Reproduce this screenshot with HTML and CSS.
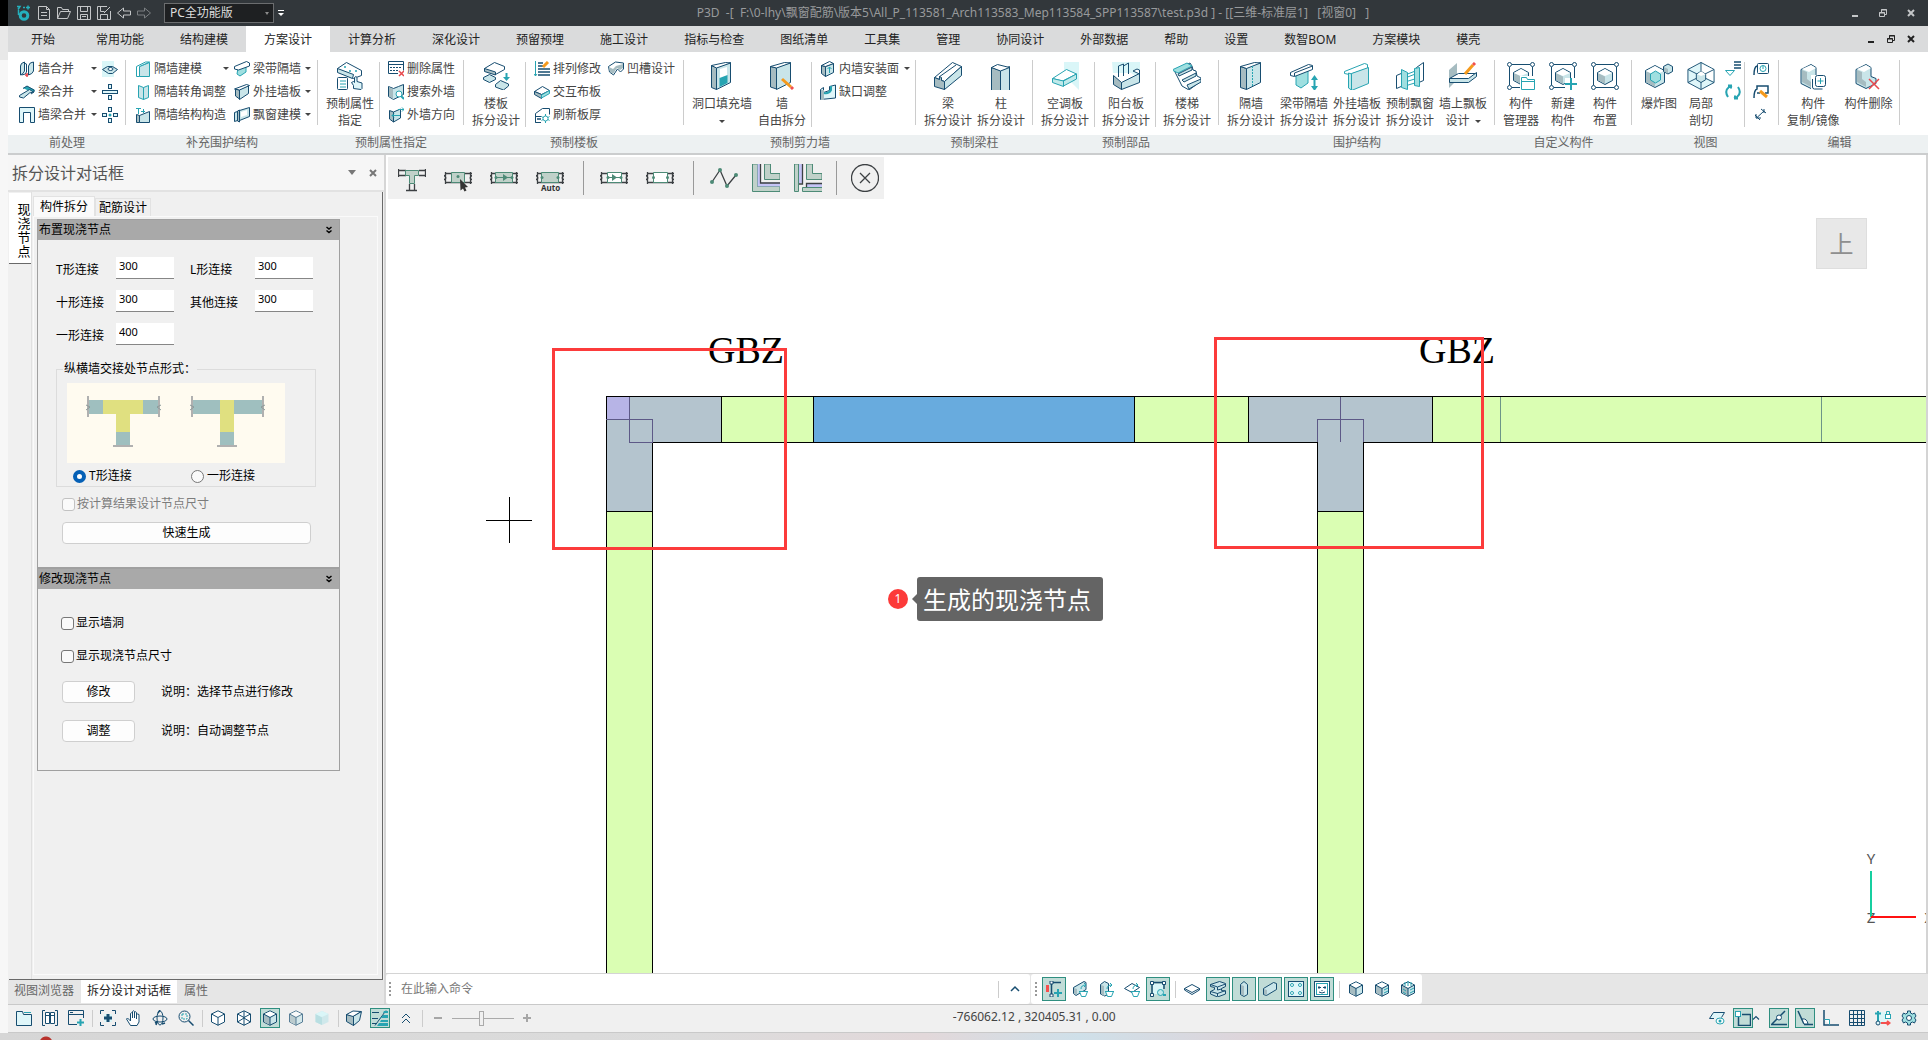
FILE: index.html
```html
<!DOCTYPE html>
<html lang="zh-CN">
<head>
<meta charset="utf-8">
<title>P3D</title>
<link rel="stylesheet" href="styles.css">
</head>
<body>
<svg class="sprite" aria-hidden="true">
  <!-- 28px ribbon icons -->
  <symbol id="b-attr" viewBox="0 0 28 28"><path class="fw" d="M1.500 6.500 10.500.5l15 8v5l-8 3-16-7z"/><path class="fl" d="M1.500 6.500v4l15 6 1-4z"/><circle class="tf" cx="9" cy="5" r="1"/><circle class="tf" cx="14" cy="9" r="1"/><circle class="tf" cx="20" cy="9" r="1"/><rect class="fw" x="1.500" y="15.500" width="10" height="12" rx="1"/><path class="tl" d="M4 19h6M4 22h6M4 25h6"/><path class="fa" d="M17.500 26.500v-3l-2-3 2-1 1 1v-5q1.500-2 2.500 0v4l5 1.500v5.500l-1 1z"/></symbol>
  <symbol id="b-floor" viewBox="0 0 28 28"><path class="fw" d="M2.500 6.500 12.500.5l10 4v3l-9 5-11-4z"/><path class="fg" d="M2.500 6.500v3l11 3.500v-3z"/><path class="fl" d="M1.500 15.500l6-3 6 3v2l-6 3-6-3z"/><path class="fl" d="M13.500 22.500l5-4 8 3.500v2l-5 4-8-3z"/><path class="tt" d="M24.500 11v5"/><path class="tf" d="M21 15h7l-3.500 4z"/></symbol>
  <symbol id="b-hole" viewBox="0 0 28 28"><path class="fl" d="M8.500 5.500l14-5v20l-14 7z"/><path class="fg" d="M3.500 3.500l5 2v22l-5-2z"/><path class="fw" d="M3.500 3.500l14-3 5 .5-14 5z"/><path class="wf" d="M12 7l7-2v12l-7 2z"/><path class="tf" d="M11.500 16l8-3v8l-8 4z"/></symbol>
  <symbol id="b-free" viewBox="0 0 28 28"><path class="fl" d="M8.500 5.500l14-5v20l-14 7z"/><path class="fg" d="M2.500 4.500l6 1.500v21l-6-2z"/><path class="fw" d="M2.500 4.500l14-4 6 .5-14 5z"/><path class="pen" d="M14 17l9 8"/><path class="rd" d="M23 25l2 2"/></symbol>
  <symbol id="b-beam" viewBox="0 0 28 28"><path class="fw" d="M.5 15.500 18.500.5l9 4-17 15z"/><path class="fg" d="M.5 15.500v9l10 3v-8l-3-1v-3l-2-1v3z"/><path class="fl" d="M10.500 19.500l17-15v9l-17 14z"/><path class="ol" d="M5 15 22 3"/></symbol>
  <symbol id="b-col" viewBox="0 0 28 28"><path class="fl" d="M13.500 8.500l9-4v24h-9z"/><path class="fg" d="M4.500 5.500l9 3v20h-9z"/><path class="fw" d="M4.500 5.500l6-3 12 3-9 3.500z"/></symbol>
  <symbol id="b-ac" viewBox="0 0 28 28"><path class="aq" d="M13 0h15v28l-9-9-6-5z"/><path class="tw" d="M1.500 16.500l14-9 10 4.500-14 7z"/><path class="tg" d="M1.500 16.500v4l11 4v-5.500z"/><path class="tg" d="M12.500 19l13-7v5l-13 7z"/></symbol>
  <symbol id="b-balc" viewBox="0 0 28 28"><path class="aq" d="M0 0h28v17l-9-6H1z"/><path class="fl" d="M9.500 20.500l18-9v9l-18 7z"/><path class="fg" d="M1.500 13.500l8 7v7l-8-5z"/><path class="ol" d="M6.500 15V4l5-2v12M11.500 4l5-3v11"/><path class="fw" d="M21 9l4-2 2.500 1v4z"/></symbol>
  <symbol id="b-stair" viewBox="0 0 28 28"><path class="fw" d="M1 8 17 1l2 3 1 4 3 1 1 5 4 2v3l-12 9-7-4z"/><path class="ttg" d="M-1 8 14 1l5 3-14 7z"/><path class="fl" d="M5 12l14-7v3L6 14zM9 18l14-7v3l-12 6zM14 23l14-6v3l-12 7z"/></symbol>
  <symbol id="b-pwall" viewBox="0 0 28 28"><path class="fl" d="M9.500 5.500l14-5v20l-14 7z"/><path class="fg" d="M3.500 4.500l6 2v21l-6-2z"/><path class="fw" d="M3.500 4.500l14-4 6 .5-14 5.500z"/><path class="tl" stroke-dasharray="2 1" d="M15.500 4v21"/></symbol>
  <symbol id="b-bwall" viewBox="0 0 28 28"><path class="ttg" d="M6 11l12-4v14l-7 5-5-3z"/><path class="fw" d="M.5 10.500 18.500 2.500l4 1v4l-18 7-4-1z"/><path class="ol" d="M4.500 14v-3l18-7"/><path class="tt" d="M24.500 16v9"/><path class="tf" d="M21 18l3.500-5 3.500 5zM21 24l3.500 5 3.500-5z"/></symbol>
  <symbol id="b-hwall" viewBox="0 0 28 28"><path class="tw" d="M1.500 9.500 21.500 1.500l3 1v4l-18 6-5-1z"/><path class="tl2" d="M8.500 11.500l17-6v16l-17 7z"/><path class="tg" d="M5.500 11l3 1v16l-3-2z"/></symbol>
  <symbol id="b-bay" viewBox="0 0 28 28"><path class="fw" d="M.5 13.500l7-3v13l-7 3zM20.500 5.500l7-5v18l-7 3z"/><path class="tw" d="M9 13l13-5v3l-13 5zM9 20l13-4v4l-13 4z"/><path class="ttg" d="M5.500 7.500l6 3v17l-6-2zM18.500 6.500l5-1v19l-5-1z"/></symbol>
  <symbol id="b-upbay" viewBox="0 0 28 28"><path class="gf" d="M0 8 8 1v17l-8 8z"/><path class="fw" d="M.5 16.500l9-5h18l-8 6z"/><path class="fl" d="M.5 16.500h19l8-6v4l-8 6h-19z"/><path class="pen" d="M16 12l8-9"/><path class="rd" d="M24 3l2-2"/></symbol>
  <symbol id="frame" viewBox="0 0 28 28"><path class="ol" d="M5 2.500h18M5 25.500h18M2.500 5v18M25.500 5v18"/><circle class="fw" cx="2.500" cy="2.500" r="2"/><circle class="fw" cx="25.500" cy="2.500" r="2"/><circle class="fw" cx="2.500" cy="25.500" r="2"/><circle class="fw" cx="25.500" cy="25.500" r="2"/><path class="fl" d="M14 6.500l7.500 4v8l-7.500 4-7.500-4v-8z"/><path class="gf" d="M7 11l7 3.500V22l-7-4z"/><path class="wf" d="M14 7l7 4-7 3-7-3z"/></symbol>
  <symbol id="b-mgr" viewBox="0 0 28 28"><use href="#frame"/><path class="wf" d="M13 14h15v14H13z"/><path class="tw" d="M14.500 27.500v-12h5l1 2h7v10zM15 19.500h12"/></symbol>
  <symbol id="b-new" viewBox="0 0 28 28"><use href="#frame"/><path class="wf" d="M16 16h12v12H16z"/><path class="tt" d="M22 16v12M16 22h12"/></symbol>
  <symbol id="b-explode" viewBox="0 0 28 28"><path class="fl" d="M10 3.500l9.500 5v12l-9.500 5-9.500-5v-12z"/><path class="gf" d="M1 9l9 4.500V25l-9-5z"/><path class="wf" d="M10 4l9 5-9 4-9-4z"/><path class="ttg" d="M10.500 9l5 3v6l-5 3-5-3v-6z"/><path class="fl" d="M23 2l4.500 2.500v5L23 12l-4.500-2.500v-5z"/><path class="gf" d="M19 5l4 2v4.500l-4-2z"/></symbol>
  <symbol id="b-section" viewBox="0 0 30 30"><path class="fa" d="M15 .5l14 7.500v14l-14 7.500L1 22V8z"/><path class="wf" d="M15 2v12l13 7V8z"/><path class="ol" d="M15 .5v29M1 8l28 14M29 8 1 22"/><path class="fl" d="M15 10l5 3v6l-5 3-5-3v-6z"/><path class="wf" d="M15 10l5 3-5 2-4-2z"/></symbol>
  <symbol id="b-copy" viewBox="0 0 28 28"><path class="fl" d="M12 2.500l5 3v9l5 2v5l-10 5-10-5v-14z"/><path class="gf" d="M3 8l5 2v7l4 3v5l-9-5z"/><path class="wf" d="M12 3l5 3-7 4-7-3z"/><path class="wf" d="M12 13h14v15H12z"/><rect class="fw" x="16.500" y="13.500" width="10" height="11" rx="2"/><path class="ol" d="M13.500 17v8q0 2 2 2h8"/><path class="tl" d="M21.500 16v6M18.500 19h6"/></symbol>
  <symbol id="b-del" viewBox="0 0 28 28"><path class="fl" d="M12 2.500l5 3v9l5 2v5l-10 5-10-5v-14z"/><path class="gf" d="M3 8l5 2v7l4 3v5l-9-5z"/><path class="wf" d="M12 3l5 3-7 4-7-3z"/><path class="rl" d="M15 17l10 10M25 17l-10 10"/></symbol>

  <!-- 16px ribbon icons -->
  <symbol id="i-wm" viewBox="0 0 16 16"><path class="fl" d="M1.500 5q0-3 4-4v9q-1 3-4 4zM9.500 5q1-4 5-4v9q-1 3-5 4z"/><path class="ol" d="M5.500 3q2-1 2 0v8q-1 3-5 3"/><path class="rl" d="M6 14h3M8 12v4"/></symbol>
  <symbol id="i-bm" viewBox="0 0 16 16"><path class="tf" d="M4 4l4-2 8 4-2 3z"/><path class="fl" d="M.5 11.500l10-6 4 2.500-4 1-6 5-4-1z"/><path class="ol" d="M4 4.500 8 2l7 4v2l-3 2"/></symbol>
  <symbol id="i-wb" viewBox="0 0 16 16"><path class="fa" d="M.5 15.500V.5h15v15h-4v-10h-7v10z"/></symbol>
  <symbol id="i-m1" viewBox="0 0 16 16"><path class="aq" d="M0 0h12v16H0z"/><path class="fl" d="M.5 8.500l5-3h5l5 3-5 4h-4z"/><ellipse class="fw" cx="8.500" cy="8" rx="2.500" ry="1.500"/></symbol>
  <symbol id="i-m2" viewBox="0 0 16 16"><rect class="fa" x="6.500" y=".5" width="3" height="4"/><rect class="fa" x=".5" y="6.500" width="15" height="3"/><rect class="fa" x="6.500" y="11.500" width="3" height="4"/></symbol>
  <symbol id="i-m3" viewBox="0 0 16 16"><rect class="fa" x="6.500" y=".5" width="3" height="4"/><rect class="fa" x=".5" y="6.500" width="4" height="3"/><rect class="fa" x="11.500" y="6.500" width="4" height="3"/><rect class="fa" x="6.500" y="11.500" width="3" height="4"/><circle class="tf" cx="8" cy="8" r="1.500"/></symbol>
  <symbol id="i-pb" viewBox="0 0 16 16"><path class="tl2" d="M4.500 5.500l10-4v14h-10z"/><path class="tw" d="M1.500 5.500l9-4.500h4l-10 4.500v10h-3z"/></symbol>
  <symbol id="i-pc" viewBox="0 0 16 16"><path class="tl2" d="M3.500 1.500l5 2v12l-5-2z"/><path class="tl2" d="M8.500 3.500l5-2v12l-5 2z"/></symbol>
  <symbol id="i-ps" viewBox="0 0 16 16"><path class="fl" d="M4.500 8.500l10-4v11h-10z"/><path class="fg" d="M1.500 7.500l3 1v7h-3z"/><path class="tl" d="M1 1.500h5M3.500 1v6M6 4.500h4M8.500 2v4"/></symbol>
  <symbol id="i-bw" viewBox="0 0 16 16"><path class="ttg" d="M4 7l8-3v7l-6 4-3-2z"/><path class="fw" d="M.5 5.500l12-5 3 1.500v3l-11 4-4-1z"/></symbol>
  <symbol id="i-hw" viewBox="0 0 16 16"><path class="fl" d="M5.500 5.500l9-4v8l-9 6z"/><path class="fg" d="M1.500 5l4 1v9l-4-3z"/><path class="fw" d="M.5 5l12-4.500 3 1-10 4.500z"/></symbol>
  <symbol id="i-by" viewBox="0 0 16 16"><path class="fl" d="M.5 5.500l3-1v9l-3 1zM5.500 3.500l10-3v9l-10 4z"/><path class="fg" d="M3.500 4l2-1v12l-2-1z"/><path class="wf" d="M7 5l6-2v5l-6 2z"/></symbol>
  <symbol id="i-da" viewBox="0 0 16 16"><path class="fw" d="M.5.500h15v9M10 12.500H.5V.500M.5 3.500h15"/><path class="ol" stroke-dasharray="2 1" d="M2 6.500h11M2 9.500h9"/><path class="rl" d="M11 10l5 5M16 10l-5 5"/></symbol>
  <symbol id="i-se" viewBox="0 0 16 16"><path class="fl" d="M.5 2.500l5 2 5-2 5-2v10l-10 5-5-3z"/><path class="gf" d="M1 3l4 2v10l-4-3z"/><circle class="tw" cx="11" cy="10" r="3"/><path class="tt" d="M13 12l3 3"/></symbol>
  <symbol id="i-di" viewBox="0 0 16 16"><path class="fl" d="M5.500 5l7-3v9l-7 4z"/><path class="fg" d="M1.500 3.500l4 1.500v10l-4-3z"/><path class="tl" d="M10 2.500h6M14 .5l2 2-2 2M12 8.500H4M6 6.500l-2 2 2 2"/></symbol>
  <symbol id="i-ar" viewBox="0 0 16 16"><path class="tl" d="M1.500 0v15M0 13l1.500 2L3 13"/><path class="ol2" d="M4 2h5M4 5h5M4 8h12M4 11h12M4 14h12"/><path class="pen" d="M9 6l5-5"/></symbol>
  <symbol id="i-in" viewBox="0 0 16 16"><path class="fw" d="M.5 7.500l8-5 7 4-8 4z"/><path class="fg" d="M.5 7.500v3l7 4v-4z"/><path class="ttg" d="M7.500 11l8-4.500v3l-8 4.500z"/></symbol>
  <symbol id="i-re" viewBox="0 0 16 16"><path class="fw" d="M1.500 15.500v-9l7-5h7v6M7 15.500H1.500v-6h6"/><path class="ol2" d="M3 12h4"/><circle class="tw" cx="11.500" cy="11.500" r="2.500"/><path class="tl" d="M11.500 7v2M11.500 14v2M7.500 9.500l1.500 1M14 12.500l1.500 1M15.500 9.500l-1.500 1M9 12.500l-1.500 1"/></symbol>
  <symbol id="i-gr" viewBox="0 0 16 16"><path class="fw" d="M.5 5.500l7-4.500 8 1v6l-3 3-3-3-4 6-4-3z"/><path class="gf" d="M1 6l4 2 3-3 7-2v4l-3 2-3-2-4 6-3-2z"/></symbol>
  <symbol id="i-iw" viewBox="0 0 16 16"><path class="fl" d="M5.500 5.500l8-3v9l-8 4z"/><path class="fg" d="M1.500 4.500l4 1v10l-4-3z"/><path class="fw" d="M1.500 4.500 9.500.5l4 2-8 3z"/><path class="tl" d="M9.500 12V6M7.500 8l2-2 2 2"/></symbol>
  <symbol id="i-ga" viewBox="0 0 16 16"><path class="fa" d="M.5 15.500v-10l3-2v5l6-2v-4l6-1.500v13z"/><path class="gf" d="M1 6h3v10H1z"/><path class="tt" d="M4 9q5 1 7-3V2"/></symbol>
  <symbol id="i-list" viewBox="0 0 16 16"><path class="ol2" d="M9 1h7M9 4h7M9 7h7"/><path class="tw" d="M.5 9.500h9l-4.500 5z"/></symbol>
  <symbol id="i-rot" viewBox="0 0 16 16"><path class="tt" d="M3 13Q-1 7 4 3l3-1M3 1.500h3v3M13 3q4 6-1 10l-3 1M13 14.500h-3v-3"/></symbol>
  <symbol id="i-an1" viewBox="0 0 16 16"><path class="ol2" d="M1 14q0-8 3-9"/><rect class="fw" x="4.500" y="2.500" width="11" height="10" rx="1"/><circle class="tl" cx="10" cy="7.500" r="3"/><path class="tl" d="M10 5v3"/></symbol>
  <symbol id="i-an2" viewBox="0 0 16 16"><path class="ol2" d="M1 14q0-8 3-9V2h11v7h-3M4 9h3"/><path class="pen" d="M7 7l7 6"/></symbol>
  <symbol id="i-an3" viewBox="0 0 16 16"><path class="ol" d="M3.500 11 11 4M8 2l5 4M11 6V2M2 8l5 5M3 7v4h5"/></symbol>

  <!-- view and status bar icons -->
  <symbol id="s-tab" viewBox="0 0 16 16"><path class="fa" d="M.5 15.500V1.500h6l1 3h8v11z"/><path class="tl" d="M8 2.500h7"/></symbol>
  <symbol id="s-split" viewBox="0 0 16 16"><path class="ol" d="M3 .5H.5v15H3M13 .5h2.500v15H13"/><path class="fw" d="M3.500 2.500h4v11h-4zM8.500 2.500h4v11h-4zM3.500 5.500h4M8.500 5.500h4"/></symbol>
  <symbol id="s-win" viewBox="0 0 16 16"><path class="ol" d="M15.500 8V.500H.5v14H9M.5 4.500h15M2 2.500h3"/><path class="tt" d="M12.500 9v7M9 12.500h7"/></symbol>
  <symbol id="s-fit" viewBox="0 0 16 16"><path class="aq" d="M4 4h8v8H4z"/><path class="ol" d="M.5 4V.500H4M12 .5h3.500V4M15.500 12v3.500H12M4 15.500H.5V12"/><path class="ol3" d="M8 4v8M4 8h8"/></symbol>
  <symbol id="s-hand" viewBox="0 0 16 16"><path class="fw" d="M4.500 15.500 .5 9l1-1 3 3V3.500q1-1.500 2 0V8 1.500q1-1.500 2 0V8 2.500q1-1.500 2 0V9 4.500q1-1 2.500 0V12l-2 3.500z"/></symbol>
  <symbol id="s-orbit" viewBox="0 0 16 16"><ellipse class="ol" cx="8" cy="9" rx="7" ry="3"/><ellipse class="ol" cx="8" cy="8" rx="3" ry="7"/><path class="ol2" d="M3 13l2-1-1 3M10 14l3-1M6 3l2-3"/></symbol>
  <symbol id="s-zoom" viewBox="0 0 16 16"><circle class="ol" cx="6.500" cy="6.500" r="5.500"/><path class="tl" stroke-dasharray="2 1" d="M4 4h5v5H4z"/><path class="ol2" d="M10.500 10.500l5 5"/></symbol>
  <symbol id="c-wire" viewBox="0 0 16 16"><path class="fw" d="M8 .8 14.500 4v8L8 15.200 1.500 12V4z"/><path class="ol" d="M1.500 4 8 7.500 14.500 4M8 7.500v8"/></symbol>
  <symbol id="c-full" viewBox="0 0 16 16"><use href="#c-wire"/><path class="ol" d="M8 1v7M1.500 12 8 8l6.500 4"/></symbol>
  <symbol id="c-shade" viewBox="0 0 16 16"><path class="fl" d="M8 .8 14.500 4v8L8 15.200 1.500 12V4z"/><path class="gf" d="M2 4.500 8 7.500V15l-6-3z"/><path class="wf" d="M8 1.500 13.500 4 8 7 2.500 4z"/><path class="ol" d="M1.500 4 8 7.500 14.500 4M8 7.500v8"/></symbol>
  <symbol id="c-soft" viewBox="0 0 16 16"><path class="lf" d="M8 1l6.500 3v8L8 15l-6.500-3V4z"/><path class="gf2" d="M1.500 4 8 7.500V15l-6.500-3z"/><path class="aq" d="M8 1l6.500 3L8 7 1.500 4z"/></symbol>
  <symbol id="c-dot" viewBox="0 0 16 16"><use href="#c-shade"/><path class="tl" d="M10 9l4-2M10 12l4-2"/></symbol>
  <symbol id="c-open" viewBox="0 0 16 16"><use href="#c-shade"/><path class="tl" d="M10 9l4-2M10 12l4-2M3 8l3 2M3 11l3 2M5 1v4M8 0v5M11 1v4"/></symbol>
  <symbol id="s-persp" viewBox="0 0 16 16"><path class="fl" d="M7.500 6l8-4.500-2 9-6 5z"/><path class="fg" d="M.5 4.500l7 1.500v9.500l-7-4z"/><path class="fw" d="M.5 4.500 7 1l8 .5-8 5z"/></symbol>
  <symbol id="s-vis" viewBox="0 0 16 16"><path class="ol" d="M0 2.500h7M0 8.500h6M0 13.500h5M3 15.500 14 .5"/><path class="tf" d="M11 5h5v3H9zM9 10h7v2H8zM7 13h9v3H5zM12 1h4v2h-5z"/></symbol>
  <symbol id="s-up" viewBox="0 0 16 16"><path class="ol" d="M4 8l4-4 4 4M4 13l4-4 4 4"/></symbol>
  <symbol id="s-chev" viewBox="0 0 16 16"><path class="ol2" d="M4 10l4-4 4 4"/></symbol>
  <symbol id="s-plus" viewBox="0 0 16 16"><path class="gl" d="M8 4v8M4 8h8"/></symbol>
  <symbol id="s-minus" viewBox="0 0 16 16"><path class="gl" d="M4 8h8"/></symbol>
  <symbol id="k-axis" viewBox="0 0 16 16"><path class="rf" d="M0 4h3v7H0z"/><path class="ol2" d="M5.500 2v12M5 1.500h10"/><path class="fw" d="M4 0h3v3H4zM4 13h3v3H4z"/><path class="tt" d="M12 8v8M8 12h8"/></symbol>
  <symbol id="k-cup" viewBox="0 0 16 16"><path class="tl" d="M9 8q0-4 5-4M12 2l2 2-2 2"/><path class="tw" d="M7.500 10.500h8l-2 5h-4zM7 10.500h9"/></symbol>
  <symbol id="k-wall" viewBox="0 0 16 16"><path class="fl" d="M1.500 6.500 12 .5l2 1v7l-10 6-2.500-2z"/><path class="gf" d="M2 7l3 1v6l-3-2z"/><use href="#k-cup"/></symbol>
  <symbol id="k-col" viewBox="0 0 16 16"><path class="fl" d="M2.500 3.500l4-3 4 2v11l-4 1.500-4-2z"/><path class="gf" d="M3 4l3 1v10l-3-2z"/><use href="#k-cup"/></symbol>
  <symbol id="k-slab" viewBox="0 0 16 16"><path class="fw" d="M.5 7.500 8 2.500l7.500 4-7.500 5z"/><use href="#k-cup"/></symbol>
  <symbol id="k-frame" viewBox="0 0 16 16"><path class="aq" d="M3 3h10v10H3z"/><path class="ol2" d="M2 3v10M3 1.500h10M14 3v5"/><path class="fw" d="M.5.500h3v3h-3zM12.500.5h3v3h-3zM.5 12.500h3v3h-3z"/><circle class="tg" cx="10.500" cy="11.500" r="3"/><path class="tt" d="M13 14h3"/></symbol>
  <symbol id="k-plate" viewBox="0 0 16 16"><path class="fw" d="M.5 7.500 8 3.500l7.500 4v1.500L8 13.500.5 9z"/><path class="ol" d="M.5 7.500 8 11.500l7.500-4"/></symbol>
  <symbol id="k-beam" viewBox="0 0 16 16"><path class="fl" d="M.5 3.500l9-3 6 2v3l-4 2v2l4 .5v3l-8 3-7-3v-2.500l4-2V6.500l-4-1z"/><path class="ol" d="M.5 3.500l7 2.500 8-3M7.500 6v3l4-1M.5 10.500l7 2 8-3M7.500 12v3.500"/></symbol>
  <symbol id="k-pill" viewBox="0 0 16 16"><path class="fl" d="M4.500 3.500 8 .5l3.500 3v10L8 15.500l-3.500-2z"/><path class="gf" d="M5 4l3 1v10l-3-2z"/></symbol>
  <symbol id="k-board" viewBox="0 0 16 16"><path class="fl" d="M1.500 7.500l10-6 3 1v6l-10 6-3-1z"/><path class="gf" d="M2 8l3 1v5l-3-1z"/></symbol>
  <symbol id="k-dice" viewBox="0 0 16 16"><rect class="fa" x=".5" y=".5" width="15" height="15"/><circle class="tw" cx="4" cy="4" r="1.500"/><circle class="tw" cx="12" cy="4" r="1.500"/><circle class="tw" cx="4" cy="12" r="1.500"/><circle class="tw" cx="12" cy="12" r="1.500"/></symbol>
  <symbol id="k-sock" viewBox="0 0 16 16"><rect class="fw" x=".5" y=".5" width="15" height="15"/><rect class="tl" x="2.500" y="2.500" width="11" height="11"/><path class="ol" d="M5 5v3M4 6.500h3M11 5v3M9 6.500h3M5 11l3 1 3-1M8 9v1"/></symbol>
  <symbol id="r-eye" viewBox="0 0 16 16"><path class="fa" d="M.5 8.500l4-6h11l-3 5M.5 8.500H5"/><ellipse class="tw" cx="11" cy="11" rx="4" ry="3"/><circle class="tf" cx="11" cy="11" r="1.500"/></symbol>
  <symbol id="r-box" viewBox="0 0 16 16"><path class="ol2" d="M3.500 6v9.500h12v-11H7"/><rect class="tw" x=".5" y="1.500" width="5" height="5"/></symbol>
  <symbol id="r-near" viewBox="0 0 16 16"><path class="ol2" d="M0 14.500h16M1 14 14 1"/><circle class="fw" cx="8" cy="7.500" r="2.500"/></symbol>
  <symbol id="r-ang" viewBox="0 0 16 16"><path class="ol2" d="M1 1l6 13M7 14.500h9"/><path class="fw" d="M5 9q5-1 6 5H7z"/></symbol>
  <symbol id="r-perp" viewBox="0 0 16 16"><path class="ol2" d="M1 0v15h15"/><path class="tw" d="M1.500 9.500h5v5"/></symbol>
  <symbol id="r-grid" viewBox="0 0 16 16"><path class="ol" d="M.5.500h15v15H.500zM4.500 0v16M8.500 0v16M12.500 0v16M0 4.500h16M0 8.500h16M0 12.500h16"/></symbol>
  <symbol id="r-lock" viewBox="0 0 16 16"><path class="aq" d="M4 2h6v10H4z"/><path class="tt" d="M3 13V3M0 3.500h6M3 1v2"/><circle class="fa" cx="3" cy="13" r="2"/><path class="rt" d="M6 13h8M12 11l2.500 2-2.500 2"/><rect class="tw" x="10.500" y="4.500" width="5" height="4"/><path class="tl" d="M11.500 4V1.500h3V4"/></symbol>
  <symbol id="r-gear" viewBox="0 0 16 16"><path class="ttn" d="M6.500 1h3v2l2 1 2-1 1.500 3-1.500 2 1.500 2-1.500 3-2-1-2 1v2h-3v-2l-2-1-2 1L1 10l1.500-2L1 6l1.500-3 2 1 2-1z"/><circle class="fw" cx="8" cy="8" r="2.500"/></symbol>

  <!-- canvas toolbar icons -->
  <symbol id="t-ends" viewBox="0 0 28 28"><path class="dk" d="M1.500 8v12M26.500 8v12M1 9.500h27M1 18.500h27M0 11l2 3-2 2M28 11l-2 3 2 2"/></symbol>
  <symbol id="t-tee" viewBox="0 0 28 28"><path class="dk" d="M.5 5v8M27.500 5v8M0 6.500h8M0 11.500h8M21 6.500h7M21 11.500h7M11.500 20v6M16.500 20v6M8 26.500h11"/><path class="gg" d="M7.500 6.500h13v5h-4v8h-5v-8h-4z"/></symbol>
  <symbol id="t-pick" viewBox="0 0 28 28"><use href="#t-ends"/><path class="gg" d="M7.500 8.500h13v10h-13z"/><circle class="gd" cx="14" cy="12.500" r="1.500"/><path class="bk" d="M16 15l8 8-3 .5 1.500 3-2 1-1.500-3-2.500 2z"/></symbol>
  <symbol id="t-span" viewBox="0 0 28 28"><use href="#t-ends"/><path class="gg" d="M5.500 8.500h17v10h-17zM5 13.500h18"/><circle class="gd" cx="6" cy="13.500" r="1.500"/><circle class="gd" cx="22" cy="13.500" r="1.500"/><path class="gd" d="M13 10l5 3.500-5 3.500z"/></symbol>
  <symbol id="t-auto" viewBox="0 0 28 28"><use href="#t-ends"/><path class="gg" d="M5.500 8.500h17v10h-17z"/><circle class="gd" cx="6" cy="13.500" r="1.500"/><circle class="gd" cx="22" cy="13.500" r="1.500"/></symbol>
  <symbol id="t-mid" viewBox="0 0 28 28"><use href="#t-ends"/><path class="gw" d="M7.500 8.500h14v10h-14zM7 13.500h14"/><circle class="gd" cx="8" cy="13.500" r="1.500"/><circle class="gd" cx="21" cy="13.500" r="1.500"/><path class="gd" d="M12 10l5 3.500-5 3.500z"/></symbol>
  <symbol id="t-gap" viewBox="0 0 28 28"><use href="#t-ends"/><path class="gw" d="M7.500 8.500h14v10h-14z"/><circle class="gd" cx="7.500" cy="13.500" r="1.500"/><circle class="gd" cx="21.500" cy="13.500" r="1.500"/></symbol>
  <symbol id="t-poly" viewBox="0 0 28 28"><path class="dk" d="M2 18 10 6l7 16 9-11"/><circle class="gd" cx="2" cy="18" r="2"/><circle class="gd" cx="10" cy="6" r="2"/><circle class="gd" cx="17" cy="22" r="2"/><circle class="gd" cx="26" cy="11" r="2"/></symbol>
  <symbol id="t-l1" viewBox="0 0 28 28"><path class="gg" d="M.5 0v27.500H28v-5H5.500V0z"/><path class="lv" d="M5.500 0v22.500H28v-4H9V0z"/><path class="dk" d="M8.500 0v19H28"/><path class="gg" d="M12.500 0v15.500H28v-6H18.500V0z"/></symbol>
  <symbol id="t-l2" viewBox="0 0 28 28"><path class="gg" d="M.5 0h4v27.500h-4zM28 23.500H8.500v4H28"/><path class="lv" d="M5 0h3v19H5zM12 19h16v4H12z"/><path class="dk" d="M8.500 0v20H5M28 19.500H12.500V23"/><path class="gg" d="M12.500 0v15.500H28v-6H18.500V0z"/></symbol>
  <symbol id="t-x" viewBox="0 0 28 28"><circle class="dk" cx="14" cy="14" r="13.500"/><path class="dk" d="M9 9l10 10M19 9 9 19"/></symbol>

  <!-- window controls -->
  <symbol id="w-min" viewBox="0 0 10 10"><path class="cur2" d="M2 8h6"/></symbol>
  <symbol id="w-max" viewBox="0 0 10 10"><path class="cur" d="M1.500 4.500h5v4h-5zM3.500 4V1.500h5v5H7M3 2h6M1 5h6"/></symbol>
  <symbol id="w-x" viewBox="0 0 10 10"><path class="cur2" d="M2 2l6 6M8 2 2 8"/></symbol>
</svg>

<div class="screen">
  <div class="gutter"></div>
  <div class="app">
    <header class="title">
      <div class="quick">
        <svg class="logo" viewBox="0 0 14 16"><circle cx="7" cy="10.500" r="3.800"/><path d="M1.500 5v5M0 1.500h3L1 4.500M6 2.500h2M11 .5v4M9 2.500h4"/></svg>
        <button aria-label="新建"><svg viewBox="0 0 14 14"><path class="cur" d="M1.500.5h8l3 3v10h-11zM9.500.5v3h3M4 6.500h6M4 9.500h6"/></svg></button>
        <button aria-label="打开"><svg viewBox="0 0 14 14"><path class="cur" d="M.5 12.500v-11h4l1 2h6v2M.5 12.500l3-7h10l-3 7z"/></svg></button>
        <button aria-label="保存"><svg viewBox="0 0 14 14"><path class="cur" d="M.5.500h13v13H.500zM3.500.5v5h7v-5M3.500 13.500v-5h7v5M5 10.500h4"/></svg></button>
        <button aria-label="另存为"><svg viewBox="0 0 14 14"><path class="cur" d="M10 .5H.5v13h13V5M3.500.5v5h4M3.500 13.500v-5h7v5M7 7l6-6"/></svg></button>
        <button aria-label="撤销"><svg viewBox="0 0 14 14"><path class="cur" d="M.5 7l6-5v3h7v4h-7v3z"/></svg></button>
        <button aria-label="重做" class="dim"><svg viewBox="0 0 14 14"><path class="cur" d="M13.500 7l-6-5v3h-7v4h7v3z"/></svg></button>
        <span class="combo"><select aria-label="版本"><option>PC全功能版</option></select></span>
        <button aria-label="自定义" class="more"><svg viewBox="0 0 8 8"><path class="cur" d="M1 1.500h6"/><path fill="currentColor" d="M1 4h6L4 7z"/></svg></button>
      </div>
      <h1>P3D&nbsp; -[&nbsp; F:\0-lhy\飘窗配筋\版本5\All_P_113581_Arch113583_Mep113584_SPP113587\test.p3d ] - [[三维-标准层1]&nbsp;&nbsp; [视窗0]&nbsp;&nbsp; ]</h1>
      <div class="winctl">
        <button aria-label="最小化"><svg><use href="#w-min"/></svg></button><button aria-label="还原"><svg><use href="#w-max"/></svg></button><button aria-label="关闭"><svg><use href="#w-x"/></svg></button>
      </div>
    </header>

    <nav class="menu">
      <a href="#" class="first">开始</a><a href="#">常用功能</a><a href="#">结构建模</a><a href="#" class="on">方案设计</a><a href="#">计算分析</a><a href="#">深化设计</a><a href="#">预留预埋</a><a href="#">施工设计</a><a href="#">指标与检查</a><a href="#">图纸清单</a><a href="#">工具集</a><a href="#">管理</a><a href="#">协同设计</a><a href="#">外部数据</a><a href="#">帮助</a><a href="#">设置</a><a href="#">数智BOM</a><a href="#">方案模块</a><a href="#">模壳</a>
      <div class="docctl">
        <button aria-label="最小化视图"><svg><use href="#w-min"/></svg></button><button aria-label="还原视图"><svg><use href="#w-max"/></svg></button><button aria-label="关闭视图"><svg><use href="#w-x"/></svg></button>
      </div>
    </nav>

    <div class="ribbon">
      <section class="grp g-pre"><div class="body">
        <div class="col c-merge">
          <button class="sm"><svg><use href="#i-wm"/></svg>墙合并<i class="car"></i></button>
          <button class="sm"><svg><use href="#i-bm"/></svg>梁合并<i class="car"></i></button>
          <button class="sm"><svg><use href="#i-wb"/></svg>墙梁合并<i class="car"></i></button>
        </div>
        <div class="col">
          <button class="sm" aria-label="板合并"><svg><use href="#i-m1"/></svg></button>
          <button class="sm" aria-label="打断"><svg><use href="#i-m2"/></svg></button>
          <button class="sm" aria-label="交叉打断"><svg><use href="#i-m3"/></svg></button>
        </div>
      </div><h2>前处理</h2></section>

      <section class="grp g-sup"><div class="body">
        <div class="col c-part">
          <button class="sm"><svg><use href="#i-pb"/></svg>隔墙建模<i class="car"></i></button>
          <button class="sm"><svg><use href="#i-pc"/></svg>隔墙转角调整</button>
          <button class="sm"><svg><use href="#i-ps"/></svg>隔墙结构构造</button>
        </div>
        <div class="col c-hang">
          <button class="sm"><svg><use href="#i-bw"/></svg>梁带隔墙<i class="car"></i></button>
          <button class="sm"><svg><use href="#i-hw"/></svg>外挂墙板<i class="car"></i></button>
          <button class="sm"><svg><use href="#i-by"/></svg>飘窗建模<i class="car"></i></button>
        </div>
      </div><h2>补充围护结构</h2></section>

      <section class="grp g-attr"><div class="body">
        <button class="big"><svg><use href="#b-attr"/></svg>预制属性<br>指定</button>
        <i class="sep"></i>
        <div class="col">
          <button class="sm"><svg><use href="#i-da"/></svg>删除属性</button>
          <button class="sm"><svg><use href="#i-se"/></svg>搜索外墙</button>
          <button class="sm"><svg><use href="#i-di"/></svg>外墙方向</button>
        </div>
      </div><h2>预制属性指定</h2></section>

      <section class="grp g-floor"><div class="body">
        <button class="big"><svg><use href="#b-floor"/></svg>楼板<br>拆分设计</button>
        <i class="sep"></i>
        <div class="col">
          <button class="sm"><svg><use href="#i-ar"/></svg>排列修改</button>
          <button class="sm"><svg><use href="#i-in"/></svg>交互布板</button>
          <button class="sm"><svg><use href="#i-re"/></svg>刷新板厚</button>
        </div>
        <div class="col">
          <button class="sm"><svg><use href="#i-gr"/></svg>凹槽设计</button>
        </div>
      </div><h2>预制楼板</h2></section>

      <section class="grp g-shear"><div class="body">
        <button class="big"><svg><use href="#b-hole"/></svg>洞口填充墙<br><i class="car"></i></button>
        <button class="big"><svg><use href="#b-free"/></svg>墙<br>自由拆分</button>
        <i class="sep"></i>
        <div class="col c-inner">
          <button class="sm"><svg><use href="#i-iw"/></svg>内墙安装面<i class="car"></i></button>
          <button class="sm"><svg><use href="#i-ga"/></svg>缺口调整</button>
        </div>
      </div><h2>预制剪力墙</h2></section>

      <section class="grp g-beam"><div class="body">
        <button class="big"><svg><use href="#b-beam"/></svg>梁<br>拆分设计</button>
        <button class="big"><svg><use href="#b-col"/></svg>柱<br>拆分设计</button>
      </div><h2>预制梁柱</h2></section>

      <section class="grp g-part"><div class="body">
        <button class="big"><svg><use href="#b-ac"/></svg>空调板<br>拆分设计</button>
        <i class="sep"></i>
        <button class="big"><svg><use href="#b-balc"/></svg>阳台板<br>拆分设计</button>
        <i class="sep"></i>
        <button class="big"><svg><use href="#b-stair"/></svg>楼梯<br>拆分设计</button>
      </div><h2>预制部品</h2></section>

      <section class="grp g-env"><div class="body">
        <button class="big"><svg><use href="#b-pwall"/></svg>隔墙<br>拆分设计</button>
        <button class="big"><svg><use href="#b-bwall"/></svg>梁带隔墙<br>拆分设计</button>
        <button class="big"><svg><use href="#b-hwall"/></svg>外挂墙板<br>拆分设计</button>
        <button class="big"><svg><use href="#b-bay"/></svg>预制飘窗<br>拆分设计</button>
        <button class="big"><svg><use href="#b-upbay"/></svg>墙上飘板<br>设计<i class="car in"></i></button>
      </div><h2>围护结构</h2></section>

      <section class="grp g-cust"><div class="body">
        <button class="big"><svg><use href="#b-mgr"/></svg>构件<br>管理器</button>
        <button class="big"><svg><use href="#b-new"/></svg>新建<br>构件</button>
        <button class="big"><svg><use href="#frame"/></svg>构件<br>布置</button>
      </div><h2>自定义构件</h2></section>

      <section class="grp g-view"><div class="body">
        <button class="big"><svg><use href="#b-explode"/></svg>爆炸图<br>&nbsp;</button>
        <button class="big"><svg><use href="#b-section"/></svg>局部<br>剖切</button>
        <div class="col">
          <button class="sm" aria-label="视图列表"><svg><use href="#i-list"/></svg></button>
          <button class="sm" aria-label="刷新"><svg><use href="#i-rot"/></svg></button>
        </div>
        <i class="sep"></i>
        <div class="col">
          <button class="sm" aria-label="标注显示"><svg><use href="#i-an1"/></svg></button>
          <button class="sm" aria-label="标注修改"><svg><use href="#i-an2"/></svg></button>
          <button class="sm" aria-label="测量"><svg><use href="#i-an3"/></svg></button>
        </div>
      </div><h2>视图</h2></section>

      <section class="grp g-edit"><div class="body">
        <button class="big"><svg><use href="#b-copy"/></svg>构件<br>复制/镜像</button>
        <button class="big"><svg><use href="#b-del"/></svg>构件删除<br>&nbsp;</button>
      </div><h2>编辑</h2></section>
    </div>

    <main>
      <aside class="panel">
        <div class="phead"><h2>拆分设计对话框</h2><button class="pdrop" aria-label="菜单"></button><button aria-label="关闭"><svg><use href="#w-x"/></svg></button></div>
        <div class="pframe">
          <div class="vtabs"><button class="vtab">现浇节点</button></div>
          <div class="pbody">
            <div class="ptabs"><button class="on">构件拆分</button><button>配筋设计</button></div>
            <div class="ppage">
              <section class="box place">
                <h3>布置现浇节点<svg viewBox="0 0 8 8"><path d="M1.500 1 4 3l2.500-2M1.500 4.500 4 6.500l2.500-2"/></svg></h3>
                <div class="fields">
                  <label for="ft">T形连接</label><input id="ft" value="300">
                  <label for="fl">L形连接</label><input id="fl" value="300">
                  <label for="fc">十形连接</label><input id="fc" value="300">
                  <label for="fo">其他连接</label><input id="fo" value="300">
                  <label for="fi">一形连接</label><input id="fi" value="400">
                </div>
                <fieldset>
                  <legend>纵横墙交接处节点形式：</legend>
                  <svg class="forms" viewBox="0 0 218 80">
                    <g id="tee"><path class="fm-wall" d="M21 17h71v14H21zM49 31h14v32H49z"/><path class="fm-end" d="M21 13v21M92 13v21M46 63h20"/><path class="fm-cut" d="M19 22l4 2-4 3M94 22l-4 2 4 3"/></g>
                    <use href="#tee" x="104"/>
                    <path class="fm-node" d="M36 17h40v14H63v18H49V31H36zM153 17h14v32h-14z"/>
                  </svg>
                  <div class="radios">
                    <label><input type="radio" name="form" checked>T形连接</label>
                    <label><input type="radio" name="form">一形连接</label>
                  </div>
                </fieldset>
                <label class="check off"><input type="checkbox" disabled>按计算结果设计节点尺寸</label>
                <button class="btn wide">快速生成</button>
              </section>
              <section class="box modify">
                <h3>修改现浇节点<svg viewBox="0 0 8 8"><path d="M1.500 1 4 3l2.500-2M1.500 4.500 4 6.500l2.500-2"/></svg></h3>
                <label class="check"><input type="checkbox">显示墙洞</label>
                <label class="check"><input type="checkbox">显示现浇节点尺寸</label>
                <div class="act"><button class="btn">修改</button><span>说明：选择节点进行修改</span></div>
                <div class="act"><button class="btn">调整</button><span>说明：自动调整节点</span></div>
              </section>
            </div>
          </div>
        </div>
        <nav class="dock"><a href="#">视图浏览器</a><a href="#" class="on">拆分设计对话框</a><a href="#">属性</a></nav>
      </aside>

      <div class="work">
        <div class="view">
          <svg class="plan">
            <g class="walls">
              <rect class="grn" x="220.500" y="241.500" width="1330" height="46"/>
              <path class="grn" d="M220.500 820V356.500h46V820M931.500 820V356.500h46V820"/>
              <path class="gry" d="M220.500 241.500h115v46h-69v69h-46z"/>
              <rect class="blu" x="427.500" y="241.500" width="321" height="46"/>
              <path class="gry" d="M862.500 241.500h184v46h-69v69h-46v-69h-69z"/>
              <rect class="pur" x="221" y="242" width="22" height="22"/>
              <path class="inn" d="M220 264.500h46.500v23h-23v-45.500M931.500 287v-22.500h46V287M954.500 242v45"/>
              <path class="win" d="M1114.500 242v45M1435.500 242v45"/>
            </g>
            <path class="cross" d="M100 365.500h46M123.500 342v46"/>
            <text class="gbz" x="322" y="208">GBZ</text>
            <text class="gbz" x="1033" y="208">GBZ</text>
            <rect class="mark" x="167.500" y="194.500" width="232" height="199"/>
            <rect class="mark" x="829.500" y="183.500" width="267" height="209"/>
          </svg>
          <div class="tools">
            <button aria-label="T形节点"><svg><use href="#t-tee"/></svg></button>
            <button aria-label="点选布置"><svg><use href="#t-pick"/></svg></button>
            <button aria-label="区间布置"><svg><use href="#t-span"/></svg></button>
            <button class="auto"><svg><use href="#t-auto"/></svg><span>Auto</span></button>
            <i></i>
            <button aria-label="中部节点"><svg><use href="#t-mid"/></svg></button>
            <button aria-label="空节点"><svg><use href="#t-gap"/></svg></button>
            <i></i>
            <span class="near">
            <button aria-label="折线"><svg><use href="#t-poly"/></svg></button>
            <button aria-label="L形叠合"><svg><use href="#t-l1"/></svg></button>
            <button aria-label="L形断开"><svg><use href="#t-l2"/></svg></button>
            <i></i>
            <button aria-label="退出"><svg><use href="#t-x"/></svg></button>
            </span>
          </div>
          <button class="cube">上</button>
          <div class="note"><b>1</b><span>生成的现浇节点</span></div>
          <svg class="axis" viewBox="0 0 70 80"><text x="15" y="16">Y</text><text x="15" y="75">Z</text><text x="73" y="75">X</text><path class="ay" d="M15 23v46"/><path class="ax" d="M15 69h45"/></svg>
        </div>
        <div class="cmd">
          <div class="entry"><i class="grip"></i><input aria-label="命令" placeholder="在此输入命令"><i class="bar"></i><button aria-label="展开"><svg><use href="#s-chev"/></svg></button></div>
          <div class="snap"><i class="grip"></i>
            <button class="on" aria-label="轴网"><svg><use href="#k-axis"/></svg></button>
            <button aria-label="墙"><svg><use href="#k-wall"/></svg></button>
            <button aria-label="柱"><svg><use href="#k-col"/></svg></button>
            <button aria-label="板"><svg><use href="#k-slab"/></svg></button>
            <button class="on" aria-label="构件"><svg><use href="#k-frame"/></svg></button>
            <i class="bar"></i>
            <button aria-label="楼板"><svg><use href="#k-plate"/></svg></button>
            <button class="on" aria-label="梁"><svg><use href="#k-beam"/></svg></button>
            <button class="on" aria-label="结构柱"><svg><use href="#k-pill"/></svg></button>
            <button class="on" aria-label="墙板"><svg><use href="#k-board"/></svg></button>
            <button class="on" aria-label="埋件"><svg><use href="#k-dice"/></svg></button>
            <button class="on" aria-label="插座"><svg><use href="#k-sock"/></svg></button>
            <i class="bar"></i>
            <button aria-label="体块"><svg><use href="#c-shade"/></svg></button>
            <button aria-label="体块明细"><svg><use href="#c-dot"/></svg></button>
            <button aria-label="体块拆分"><svg><use href="#c-open"/></svg></button>
          </div>
        </div>
      </div>
    </main>

    <footer class="status">
      <div class="left">
        <button aria-label="标签页"><svg><use href="#s-tab"/></svg></button>
        <button aria-label="并排"><svg><use href="#s-split"/></svg></button>
        <button aria-label="新窗口"><svg><use href="#s-win"/></svg></button>
        <i></i>
        <button aria-label="全图"><svg><use href="#s-fit"/></svg></button>
        <button aria-label="平移"><svg><use href="#s-hand"/></svg></button>
        <button aria-label="旋转"><svg><use href="#s-orbit"/></svg></button>
        <button aria-label="缩放"><svg><use href="#s-zoom"/></svg></button>
        <i></i>
        <button aria-label="线框"><svg><use href="#c-wire"/></svg></button>
        <button aria-label="全线框"><svg><use href="#c-full"/></svg></button>
        <button class="on" aria-label="着色线框"><svg><use href="#c-shade"/></svg></button>
        <button class="pale" aria-label="隐藏线"><svg><use href="#c-shade"/></svg></button>
        <button aria-label="着色"><svg><use href="#c-soft"/></svg></button>
        <i></i>
        <button aria-label="透视"><svg><use href="#s-persp"/></svg></button>
        <button class="on" aria-label="显示"><svg><use href="#s-vis"/></svg></button>
        <button aria-label="更多"><svg><use href="#s-up"/></svg></button>
        <i></i>
        <button aria-label="缩小"><svg><use href="#s-minus"/></svg></button>
        <input type="range" aria-label="比例" min="0" max="100" value="48">
        <button aria-label="放大"><svg><use href="#s-plus"/></svg></button>
      </div>
      <output>-766062.12 , 320405.31 , 0.00</output>
      <div class="right">
        <button aria-label="工作面"><svg><use href="#r-eye"/></svg></button>
        <button class="on" aria-label="捕捉"><svg><use href="#r-box"/></svg></button>
        <button class="chev" aria-label="捕捉选项"><svg><use href="#s-chev"/></svg></button>
        <button class="on" aria-label="最近点"><svg><use href="#r-near"/></svg></button>
        <button class="on" aria-label="极轴"><svg><use href="#r-ang"/></svg></button>
        <button aria-label="正交"><svg><use href="#r-perp"/></svg></button>
        <button aria-label="网格"><svg><use href="#r-grid"/></svg></button>
        <button aria-label="坐标锁定"><svg><use href="#r-lock"/></svg></button>
        <button aria-label="设置"><svg><use href="#r-gear"/></svg></button>
      </div>
    </footer>
  </div>
</div>
<div class="desk"></div>
</body>
</html>
```

FILE: styles.css
```css
:root {
  --navy: #174d70;
  --teal: #27a4b2;
  --light: #c9e5e9;
  --slate: #a6bcc1;
  --pick: #c1dcd7;
  --pick-line: #2f8f80;
  --green-line: #4d8b77;
}
* { box-sizing: border-box; }
body {
  margin: 0;
  min-height: 100vh;
  display: flex;
  flex-direction: column;
  font: 12px/16px "Noto Sans", "Noto Sans CJK SC", sans-serif;
  color: #333;
  background: #f0f0f0;
  overflow: hidden;
}
h1, h2, h3 { margin: 0; font-weight: 400; }
button, input, select { font: inherit; color: inherit; }
button { border: 0; padding: 0; margin: 0; background: none; }
a { color: inherit; text-decoration: none; }
svg { display: block; flex: none; overflow: visible; }
.sprite { position: absolute; width: 0; height: 0; }

/* icon paints */
.ol { fill: none; stroke: var(--navy); }
.ol2 { fill: none; stroke: var(--navy); stroke-width: 1.5; }
.ol3 { fill: none; stroke: var(--navy); stroke-width: 3; }
.fw { fill: #fff; stroke: var(--navy); }
.fl { fill: var(--light); stroke: var(--navy); }
.fg { fill: var(--slate); stroke: var(--navy); }
.fa { fill: #dff6f9; stroke: var(--navy); }
.wf { fill: #fff; }
.gf { fill: var(--slate); }
.gf2 { fill: #b9dfe2; }
.lf { fill: #cfe8eb; }
.aq { fill: #daf6f8; }
.tl { fill: none; stroke: var(--teal); }
.tt { fill: none; stroke: var(--teal); stroke-width: 2; }
.tf { fill: var(--teal); }
.tw { fill: #fff; stroke: var(--teal); }
.tg { fill: #bfe9ea; stroke: var(--teal); }
.tl2 { fill: var(--light); stroke: var(--teal); }
.ttg { fill: #9fdfe0; stroke: var(--teal); }
.ttn { fill: #9fdfe0; stroke: var(--navy); }
.rl { fill: none; stroke: #e8484c; stroke-width: 1.5; }
.rt { fill: none; stroke: #f5504e; stroke-width: 2; }
.rf { fill: #f5504e; }
.pen { fill: none; stroke: #f59a1c; stroke-width: 3; }
.rd { fill: none; stroke: #f0504e; stroke-width: 3; }
.gl { fill: none; stroke: #a6a6a6; stroke-width: 2; }
.dk { fill: none; stroke: #3c4043; stroke-width: 1.3; }
.bk { fill: #333; }
.gg { fill: #c0d1c9; stroke: var(--green-line); }
.gw { fill: #fff; stroke: var(--green-line); }
.gd { fill: var(--green-line); }
.lv { fill: #c5c4f6; }
.cur { fill: none; stroke: currentColor; }
.cur2 { fill: none; stroke: currentColor; stroke-width: 2; }

.screen { flex: 1; display: flex; min-height: 0; }
.gutter { width: 8px; background: linear-gradient(#000 26px, #e8e8e8 26px, #e8e8e8 60px, #f7f7f7 60px); }
.app { flex: 1; min-width: 0; display: flex; flex-direction: column; }
.desk {
  height: 7px;
  background:
    radial-gradient(circle at 46px 10px, #b8322c 6px, transparent 7px),
    linear-gradient(90deg, #d6d6d6, #dcdcdc 36%, #e2d8da 48%, #cfe0e9 56%, #e0d3d8 66%, #e0d8da 74%, #dadada 90%);
}

/* title bar */
.title { height: 26px; display: flex; align-items: center; background: #32373b; color: #c4c6c8; }
.quick { display: flex; align-items: center; gap: 6px; width: 282px; padding-left: 9px; }
.quick svg { width: 14px; height: 14px; }
.quick .logo { height: 16px; fill: none; stroke: #24b0bd; stroke-width: 1.5; }
.quick .logo circle { stroke-width: 3; }
.quick .dim { color: #7b7f82; }
.combo { position: relative; margin-left: 7px; }
.combo select {
  appearance: none; display: block; width: 110px; height: 20px; padding: 0 5px;
  border: 1px solid #6b6d6f; border-radius: 0; background: #1e2022; color: #ddd;
}
.combo::after {
  content: ""; position: absolute; right: 5px; top: 9px;
  border: 2px solid transparent; border-top: 3px solid #8b8b8b;
}
.quick .more { color: #fff; margin-left: -3px; }
.more svg { width: 8px; height: 8px; }
.title h1 { flex: 1; text-align: center; font-size: 12px; color: #989a9c; white-space: nowrap; }
.winctl { width: 152px; display: flex; justify-content: flex-end; gap: 18px; padding-right: 12px; }
.winctl svg, .docctl svg, .phead svg { width: 10px; height: 10px; }

/* menu tabs */
.menu { height: 26px; display: flex; line-height: 27px; background: #dadbdc; color: #222; }
.menu a { padding: 0 18px; white-space: nowrap; }
.menu .first { padding: 0 23px; }
.menu .on { background: #fff; }
.docctl { margin-left: auto; display: flex; align-items: center; gap: 10px; padding-right: 12px; }

/* ribbon */
.ribbon { height: 103px; display: flex; background: linear-gradient(#fff 83px, #edf1f2 83px); border-bottom: 2px solid #cbcdce; color: #444; }
.grp { flex: none; display: flex; flex-direction: column; }
.body { height: 83px; display: flex; gap: 1px; padding-left: 6px; background: linear-gradient(#ccc, #ccc) right 8px / 1px 65px no-repeat; }
.grp h2 { font-size: 12px; line-height: 20px; text-align: center; color: #666; }
.big { padding: 10px 2px 0; height: 77px; display: block; line-height: 17px; text-align: center; white-space: nowrap; }
.big svg { width: 28px; height: 28px; margin: 0 auto 5px; }
.col { padding-top: 5px; display: flex; flex-direction: column; }
.sm { height: 23px; display: flex; align-items: center; gap: 3px; padding: 0 2px; white-space: nowrap; }
.sm svg { width: 16px; height: 16px; }
.car { display: inline-block; border: 3px solid transparent; border-top: 3px solid #444; border-bottom: 0; margin-left: auto; vertical-align: middle; }
.car.in { margin-left: 5px; }
.sep { width: 1px; height: 65px; margin: 10px 5px 0 2px; background: #ccc; }
.g-pre { width: 118px; } .g-pre .body { padding-left: 9px; }
.c-merge { width: 82px; }
.g-sup { width: 192px; } .g-sup .body { padding-left: 7px; }
.c-part { width: 98px; } .c-hang { width: 81px; }
.g-attr { width: 146px; }
.g-floor { width: 220px; } .g-floor .col + .col { margin-left: 2px; }
.g-shear { width: 232px; } .c-inner { width: 94px; } .g-shear .big + .big { margin-left: 1px; }
.g-beam { width: 117px; }
.g-part { width: 186px; } .g-part .sep { margin-right: 4px; }
.g-env { width: 276px; }
.g-cust { width: 137px; } .g-cust .body { padding-left: 6px; gap: 2px; }
.g-cust .big { width: 40px; }
.g-view { width: 147px; } .g-view .body { padding-left: 7px; } .g-view .big + .big { width: 42px; } .g-view .sep { margin-left: 0; }
.g-edit { width: 121px; }

/* left panel */
main { flex: 1; display: flex; min-height: 0; }
.panel { width: 378px; display: flex; flex-direction: column; border-right: 2px solid #d6d6d6; background: #f0f0f0; }
.phead { height: 37px; display: flex; align-items: center; gap: 12px; padding: 0 6px 0 4px; background: #f6f6f6; border-bottom: 2px solid #e2e2e2; color: #777; }
.phead h2 { flex: 1; font-size: 16px; color: #555; }
.pdrop::before { content: ""; display: block; border: 4px solid transparent; border-top: 5px solid #777; border-bottom: 0; }
.pframe { flex: 1; display: flex; margin: 0 1px; border: solid #696969; border-width: 0 1px 1px 0; color: #000; min-height: 0; }
.vtabs { width: 23px; padding-top: 1px; border-right: 1px solid #e0e0e0; }
.vtab { width: 22px; height: 71px; padding: 3px 0 0 8px; background: #fff; border-bottom: 1px solid #696969; font-size: 13px; line-height: 14px; text-align: center; display: block; }
.pbody { flex: 1; display: flex; flex-direction: column; padding: 4px 4px 4px 1px; }
.ptabs { display: flex; align-items: flex-end; height: 20px; }
.ptabs button { height: 18px; padding: 0 3px; border: 1px solid #e2e2e2; border-bottom: 0; }
.ptabs .on { height: 20px; padding: 0 6px; background: #fafafa; }
.ppage { flex: 1; padding: 2px 3px; border: 1px solid #fafafa; }
.box { width: 303px; border: 1px solid #a0a0a0; line-height: 16px; }
.box h3 { height: 20px; margin-bottom: 17px; padding: 0 6px 0 1px; display: flex; align-items: center; justify-content: space-between; background: #a9a9a9; font-size: 12px; }
.box h3 svg { width: 8px; height: 8px; fill: none; stroke: #000; stroke-width: 1.5; }
.place { height: 349px; }
.modify { height: 203px; }
.fields { display: grid; grid-template-columns: 60px 74px 65px 58px; row-gap: 11px; padding-left: 18px; align-items: center; }
.fields label { padding-top: 3px; }
.fields input { width: 58px; height: 22px; padding: 0 3px 4px; border: 0; border-bottom: 1px solid #868686; background: #fff; font-size: 11px; }
fieldset { width: 260px; height: 126px; margin: 16px 0 0 18px; padding: 0 6px; border: 1px solid #dcdcdc; min-width: 0; }
legend { padding: 0 1px; }
.forms { width: 218px; height: 80px; margin: 6px 0 5px 4px; background: #fffbf0; }
.fm-wall { fill: #9fbfbf; }
.fm-node { fill: #e0e080; }
.fm-end { fill: none; stroke: #b0b0b0; stroke-width: 2; }
.fm-cut { fill: none; stroke: #8a9a9a; }
.radios { display: flex; padding-left: 10px; }
.radios label { width: 121px; display: flex; align-items: center; gap: 3px; }
.box input[type=radio], .box input[type=checkbox] { appearance: none; width: 13px; height: 13px; margin: 0; border: 1px solid #777; border-radius: 50%; background: #fafafa; }
.box input[type=radio]:checked { border: 4px solid #0560b6; background: #fff; }
.box input[type=checkbox] { border-radius: 3px; }
.check { display: flex; align-items: center; gap: 2px; margin-left: 23px; }
.check.off { margin: 9px 0 10px 24px; color: #7c7c7c; }
.check.off input { border-color: #c2c2c2; }
.btn { width: 73px; height: 22px; background: #fdfdfd; border: 1px solid #cfcfcf; border-radius: 4px; line-height: 20px; }
.wide { display: block; width: 249px; margin-left: 24px; }
.modify .check { margin-top: 26px; margin-bottom: 17px; }
.modify .check + .check { margin-top: 0; }
.act { display: flex; align-items: center; gap: 26px; margin-left: 24px; margin-bottom: 17px; }
.dock { height: 24px; display: flex; background: #e6e6e6; color: #666; line-height: 22px; }
.dock a { padding: 0 7px; height: 23px; }
.dock a:first-child { padding: 0 7px 0 6px; }
.dock .on { background: #fff; color: #222; padding: 0 6px; }

/* drawing area */
.work { flex: 1; min-width: 0; display: flex; flex-direction: column; background: #e6e6e6; }
.view { flex: 1; position: relative; background: #fff; border: solid #d4d4d4; border-width: 0 2px 1px 0; overflow: hidden; }
.plan { position: absolute; inset: 0; width: 100%; height: 100%; overflow: hidden; }
.walls { stroke: #000; shape-rendering: crispEdges; }
.grn { fill: #dafeb3; }
.gry { fill: #b4c4ce; }
.blu { fill: #68abde; }
.pur { fill: #b7b4e6; stroke: none; }
.inn { fill: none; stroke: #5d5987; }
.win { fill: none; stroke: #6d9588; }
.cross { stroke: #000; shape-rendering: crispEdges; }
.gbz { font: 38px "Liberation Serif", serif; }
.mark { fill: none; stroke: #fc3b3b; stroke-width: 3; }
.tools { position: relative; width: fit-content; height: 42px; margin: 2px; padding: 0 5px 0 10px; display: flex; align-items: center; gap: 18px; background: #f0f0f0; }
.tools svg { width: 28px; height: 28px; }
.tools i { width: 1px; height: 34px; background: #999; margin: 0 -2px 0 1px; }
.near { display: flex; align-items: center; gap: 14px; }
.near i { margin: 0; }
.auto { position: relative; }
.auto span { position: absolute; left: 5px; top: 18px; font-size: 8px; line-height: 12px; font-weight: 700; }
.cube { position: absolute; right: 59px; top: 63px; width: 51px; height: 51px; background: #e8e8e8; border: 1px solid #dedede; color: #8f8f8f; font-size: 24px; line-height: 40px; }
.note { position: absolute; left: 502px; top: 422px; display: flex; align-items: center; gap: 9px; color: #fff; }
.note b { width: 20px; height: 20px; border-radius: 50%; background: #fc3a39; font-weight: 400; line-height: 20px; text-align: center; }
.note span { position: relative; height: 44px; padding: 0 12px 0 6px; border-radius: 3px; background: #646464; font-size: 24px; line-height: 46px; white-space: nowrap; }
.note span::before { content: ""; position: absolute; left: -5px; top: 17px; border: 5px solid transparent; border-right-color: #646464; border-left: 0; }
.axis { position: absolute; right: 0; bottom: 45px; width: 70px; height: 80px; overflow: hidden; font-size: 15px; fill: #555; text-anchor: middle; }
.ay { stroke: #16cfa0; stroke-width: 2; }
.ax { stroke: #f11; stroke-width: 2; }

/* command row */
.cmd { height: 30px; display: flex; gap: 1px; }
.cmd > div { display: flex; align-items: center; background: #fff; border-radius: 3px; }
.entry { width: 644px; }
.grip { width: 2px; height: 15px; margin: 0 3px; background: repeating-linear-gradient(#999 0 2px, transparent 2px 4px); }
.entry input { flex: 1; border: 0; padding: 0 7px; background: none; outline: 0; }
.entry input::placeholder { color: #777; opacity: 1; }
.cmd svg { width: 16px; height: 16px; margin: auto; }
.bar { width: 1px; height: 17px; background: #ccc; }
.entry button { width: 31px; }
.snap { gap: 2px; padding-right: 2px; }
.snap .grip { margin: 0 3px 0 4px; }
.snap button { width: 24px; height: 24px; border: 1px solid transparent; }
.snap .bar { margin: 0 2px 0 3px; }
.snap .on, .status .on { background: var(--pick); border: 1px solid var(--pick-line); }

/* status bar */
.status { height: 29px; display: flex; align-items: center; padding-bottom: 1px; background: #f0f0f0; border: solid #c9c9c9; border-width: 1px 0; }
.status svg { width: 16px; height: 16px; margin: auto; }
.status button { width: 20px; height: 20px; border: 1px solid transparent; }
.status > div { display: flex; align-items: center; gap: 6px; }
.left { width: 49%; padding-left: 6px; }
.left i { width: 1px; height: 17px; margin-right: -1px; background: #ccc; }
.left .pale { opacity: .7; }
.left input { appearance: none; width: 62px; height: 16px; margin: 0 -3px 0 -2px; background: linear-gradient(#aaa, #aaa) center / 100% 1px no-repeat; }
.left input::-webkit-slider-thumb { appearance: none; width: 5px; height: 15px; background: #f0f0f0; border: 1px solid #aaa; }
.status output { color: #444; line-height: 24px; padding-bottom: 2px; margin-left: 4px; white-space: nowrap; }
.right { margin-left: auto; padding-right: 9px; }
.status .chev { width: 8px; margin: 0 2px 0 -6px; }
.chev svg { width: 12px; margin-left: -4px; }
```
